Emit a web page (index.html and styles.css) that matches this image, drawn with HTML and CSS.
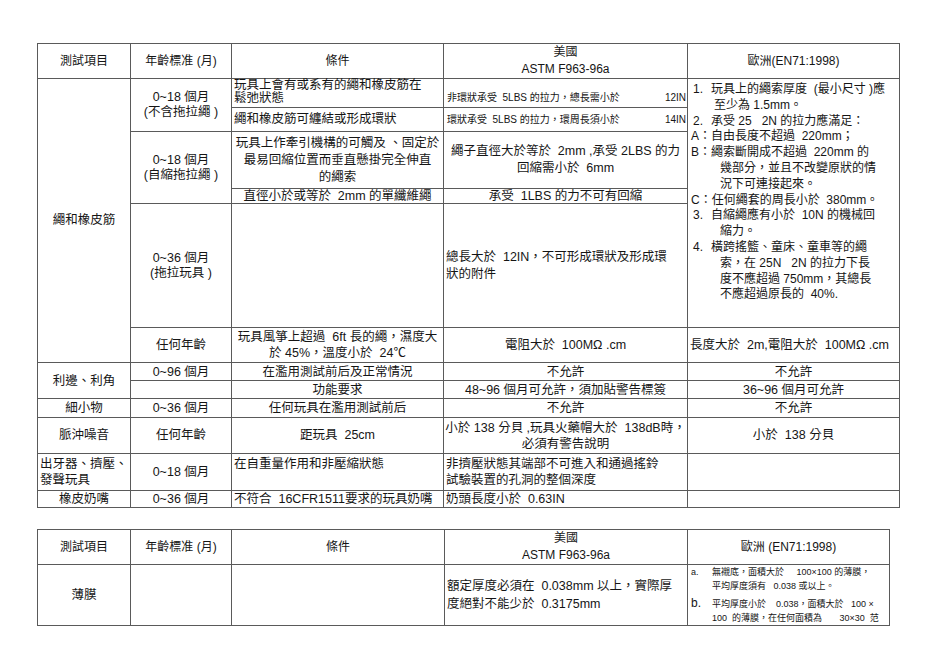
FILE: index.html
```html
<!DOCTYPE html>
<html lang="zh-Hant">
<head>
<meta charset="utf-8">
<title>玩具安全標準對照</title>
<link rel="stylesheet" href="styles.css">
</head>
<body>
<div class="page">
<table class="grid t1">
<colgroup><col class="c1"><col class="c2"><col class="c3"><col class="c4"><col class="c5"></colgroup>
<tr class="hd">
  <td>測試項目</td><td>年齡標准 (月)</td><td>條件</td><td>美國<br>ASTM F963-96a</td><td>歐洲(EN71:1998)</td>
</tr>
<tr class="r1">
  <td rowspan="6">繩和橡皮筋</td>
  <td rowspan="2" class="age">0~18 個月<br>(不含拖拉繩 )</td>
  <td class="l top tight">玩具上會有或系有的繩和橡皮筋在<br>鬆弛狀態</td>
  <td class="small low"><div class="spread"><span>非環狀承受 &nbsp;5LBS 的拉力，總長需小於</span><span>12IN</span></div></td>
  <td rowspan="5" class="eu">
    <div class="li"><span class="n">1.</span><span>玩具上的繩索厚度 &nbsp;(最小尺寸 )應</span></div>
    <div class="ind1">至少為 1.5mm。</div>
    <div class="li"><span class="n">2.</span><span>承受 25 &nbsp; 2N 的拉力應滿足：</span></div>
    <div>A：自由長度不超過 &nbsp;220mm；</div>
    <div>B：繩索斷開成不超過 &nbsp;220mm 的</div>
    <div class="ind2">幾部分，並且不改變原狀的情</div>
    <div class="ind2">況下可連接起來。</div>
    <div>C：任何繩套的周長小於 &nbsp;380mm。</div>
    <div class="li"><span class="n">3.</span><span>自縮繩應有小於 &nbsp;10N 的機械回</span></div>
    <div class="ind2">縮力。</div>
    <div class="li"><span class="n">4.</span><span>橫跨搖籃、童床、童車等的繩</span></div>
    <div class="ind2">索，在 25N &nbsp; 2N 的拉力下長</div>
    <div class="ind2">度不應超過 750mm，其總長</div>
    <div class="ind2">不應超過原長的 &nbsp;40%.</div>
  </td>
</tr>
<tr class="r2">
  <td class="l">繩和橡皮筋可纏結或形成環狀</td>
  <td class="small"><div class="spread"><span>環狀承受 &nbsp;5LBS 的拉力，環周長須小於</span><span>14IN</span></div></td>
</tr>
<tr class="r3">
  <td rowspan="2" class="age">0~18 個月<br>(自縮拖拉繩 )</td>
  <td>玩具上作牽引機構的可觸及 、固定於<br>最易回縮位置而垂直懸掛完全伸直<br>的繩索</td>
  <td>繩子直徑大於等於 &nbsp;2mm ,承受 2LBS 的力<br>回縮需小於 &nbsp;6mm</td>
</tr>
<tr class="r4">
  <td class="xs">直徑小於或等於 &nbsp;2mm 的單纖維繩</td>
  <td class="xs">承受 &nbsp;1LBS 的力不可有回縮</td>
</tr>
<tr class="r5">
  <td class="age">0~36 個月<br>(拖拉玩具 )</td>
  <td></td>
  <td class="l">總長大於 &nbsp;12IN，不可形成環狀及形成環<br>狀的附件</td>
</tr>
<tr class="r6">
  <td>任何年齡</td>
  <td class="mid">玩具風箏上超過 &nbsp;6ft 長的繩，濕度大<br>於 45%，溫度小於 &nbsp;24℃</td>
  <td>電阻大於 &nbsp;100MΩ .cm</td>
  <td class="l">長度大於 &nbsp;2m,電阻大於 &nbsp;100MΩ .cm</td>
</tr>
<tr class="r7">
  <td rowspan="2" class="one">利邊、利角</td>
  <td class="one">0~96 個月</td>
  <td class="one">在濫用測試前后及正常情況</td>
  <td class="one">不允許</td>
  <td class="one">不允許</td>
</tr>
<tr class="r8">
  <td></td>
  <td class="one">功能要求</td>
  <td class="one">48~96 個月可允許，須加貼警告標簽</td>
  <td class="one">36~96 個月可允許</td>
</tr>
<tr class="r9">
  <td class="one">細小物</td>
  <td class="one">0~36 個月</td>
  <td class="one">任何玩具在濫用測試前后</td>
  <td class="one">不允許</td>
  <td class="one">不允許</td>
</tr>
<tr class="r10">
  <td>脈沖噪音</td>
  <td>任何年齡</td>
  <td>距玩具 &nbsp;25cm</td>
  <td class="nw mid">小於 138 分貝 ,玩具火藥帽大於 &nbsp;138dB時，<br>必須有警告說明</td>
  <td>小於 &nbsp;138 分貝</td>
</tr>
<tr class="r11">
  <td class="l mid">出牙器、擠壓、<br>發聲玩具</td>
  <td>0~18 個月</td>
  <td class="l top pt">在自重量作用和非壓縮狀態</td>
  <td class="l mid">非擠壓狀態其端部不可進入和通過搖鈴<br>試驗裝置的孔洞的整個深度</td>
  <td></td>
</tr>
<tr class="r12">
  <td class="one">橡皮奶嘴</td>
  <td class="one">0~36 個月</td>
  <td class="l one">不符合 &nbsp;16CFR1511要求的玩具奶嘴</td>
  <td class="l one">奶頭長度小於 &nbsp;0.63IN</td>
  <td></td>
</tr>
</table>

<table class="grid t2">
<colgroup><col class="c1"><col class="c2"><col class="d3"><col class="d4"><col class="d5"></colgroup>
<tr class="hd">
  <td>測試項目</td><td>年齡標准 (月)</td><td>條件</td><td>美國<br>ASTM F963-96a</td><td>歐洲 (EN71:1998)</td>
</tr>
<tr class="b1">
  <td>薄膜</td>
  <td></td>
  <td></td>
  <td class="l loose">額定厚度必須在 &nbsp;0.038mm 以上，實際厚<br>度絕對不能少於 &nbsp;0.3175mm</td>
  <td class="eu2">
    <div class="sli"><span class="sn">a.</span><span>無襯底，面積大於 &nbsp; &nbsp; 100×100 的薄膜，</span></div>
    <div class="sind">平均厚度須有 &nbsp; 0.038 或以上。</div>
    <div class="sli bl"><span class="sn big">b.</span><span>平均厚度小於 &nbsp; &nbsp;0.038，面積大於 &nbsp; 100 ×</span></div>
    <div class="sind">100 &nbsp;的薄膜，在任何面積為 &nbsp; &nbsp; &nbsp; 30×30 &nbsp;范</div>
  </td>
</tr>
</table>
</div>
</body>
</html>
```

FILE: styles.css
```css
html, body {
  margin: 0;
  padding: 0;
  background: #ffffff;
}

body {
  font-family: "Liberation Sans", "Noto Sans CJK TC", sans-serif;
  color: #151515;
}

.page {
  padding: 43px 0 0 37px;
}

.grid {
  border-collapse: collapse;
  table-layout: fixed;
}

.t1 { width: 862px; }
.t2 { width: 852px; margin-top: 21px; }

.c1 { width: 93px; }
.c2 { width: 101px; }
.c3 { width: 212px; }
.c4 { width: 244px; }
.c5 { width: 212px; }
.d3 { width: 213px; }
.d4 { width: 243px; }
.d5 { width: 202px; }

.grid td {
  border: 1px solid #5a5a5a;
  padding: 0 2px;
  font-size: 12.5px;
  line-height: 17px;
  text-align: center;
  vertical-align: middle;
  overflow: visible;
}

.grid .hd td {
  font-size: 12px;
  line-height: 17px;
}

.hd { height: 34px; }
.r1 { height: 29px; }
.r2 { height: 24px; }
.r3 { height: 57px; }
.r4 { height: 15px; }
.r5 { height: 124px; }
.r6 { height: 35px; }
.r7 { height: 18px; }
.r8 { height: 18px; }
.r9 { height: 19px; }
.r10 { height: 36px; }
.r11 { height: 37px; }
.r12 { height: 17px; }
.b1 { height: 60px; }

.grid td.l { text-align: left; }
.grid td.top { vertical-align: top; }
.grid td.tight { line-height: 13px; padding-top: 0; }
.grid td.one { line-height: 14px; }
.grid td.xs { line-height: 10px; }
.grid td.mid { line-height: 16px; }
.grid td.pt { padding-top: 2px; }
.grid td.loose { line-height: 18px; }
.grid td.age { line-height: 15px; }
.grid td.nw { white-space: nowrap; padding: 0; }

.grid td.small {
  font-size: 10px;
  line-height: 13px;
  padding: 0 1px 0 3px;
}
.grid td.low { vertical-align: bottom; padding-bottom: 3px; }

.spread {
  display: flex;
  justify-content: space-between;
  white-space: nowrap;
}

.grid td.eu {
  text-align: left;
  vertical-align: top;
  font-size: 12px;
  line-height: 15.8px;
  padding: 3px 2px 0 3px;
  white-space: nowrap;
}

.li { display: flex; }
.n { width: 18px; flex: none; padding-left: 2px; }
.ind1 { padding-left: 23px; }
.ind2 { padding-left: 29px; }

.grid td.eu2 {
  text-align: left;
  vertical-align: top;
  font-size: 9px;
  line-height: 14px;
  padding: 0 0 0 3px;
  white-space: nowrap;
}

.sli { display: flex; align-items: baseline; }
.sn { width: 21px; flex: none; }
.sn.big { font-size: 12px; }
.sli.bl { margin-top: 3px; }
.sind { padding-left: 21px; }
```
